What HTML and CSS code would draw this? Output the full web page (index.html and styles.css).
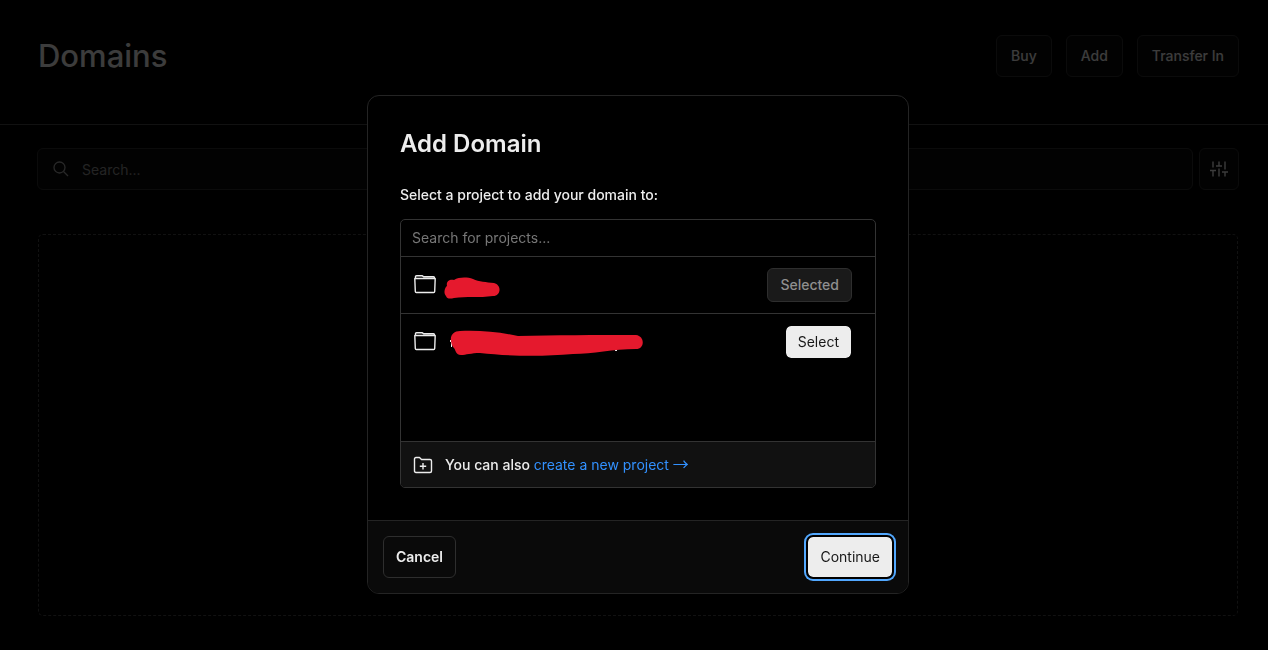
FILE: index.html
```
<!DOCTYPE html>
<html lang="en">
<head>
    <meta charset="utf-8">
    <meta name="viewport" content="width=device-width, initial-scale=1">
    <title>Domains</title>
    <link rel="stylesheet" href="styles.css">
</head>
<body>
    <header class="page-header">
        <h1>Domains</h1>
        <div class="header-actions">
            <button type="button" class="btn">Buy</button>
            <button type="button" class="btn">Add</button>
            <button type="button" class="btn">Transfer In</button>
        </div>
    </header>

    <main class="page-content">
        <div class="toolbar">
            <label class="search-box">
                <svg width="16" height="16" viewBox="0 0 16 16" fill="none" stroke="currentColor" stroke-width="1.3">
                    <circle cx="6.5" cy="6.5" r="5.5"/>
                    <path d="M10.5 10.5 L15 15"/>
                </svg>
                <input type="text" placeholder="Search..." aria-label="Search domains">
            </label>
            <button type="button" class="btn btn-icon" aria-label="Filter">
                <svg width="18" height="16" viewBox="0 0 18 16" fill="none" stroke="currentColor" stroke-width="1.4">
                    <path d="M3 .5V6.500M3 9.500V15.500M0 9.500H6M9 .5V5M9 7.500V15.500M6 5H12M15 .5V8.500M15 11V15.500M12 11H18"/>
                </svg>
            </button>
        </div>
        <div class="empty-state"></div>
    </main>

    <div class="overlay">
        <div class="modal" role="dialog" aria-modal="true" aria-labelledby="modal-title">
            <div class="modal-body">
                <h2 id="modal-title">Add Domain</h2>
                <label class="modal-label" for="project-search">Select a project to add your domain to:</label>
                <div class="picker">
                    <input type="text" id="project-search" class="picker-search" placeholder="Search for projects...">
                    <ul class="project-list">
                        <li class="project">
                            <svg class="folder" width="22" height="20" viewBox="0 1 22 20" fill="none" stroke="currentColor" stroke-width="1.4" stroke-linejoin="round">
                                <path d="M1.500 4.500V2.700Q1.500 1.700 2.500 1.700H8L9.500 2.700H19.500Q20.500 2.700 20.500 3.700V4.500M.8 4.500H21.200L20.700 17.500Q20.600 18.500 19.700 18.500H2.300Q1.400 18.500 1.300 17.500Z"/>
                            </svg>
                            <svg class="scribble" width="200" height="28" viewBox="0 0 200 28">
                                <path d="M2 25C-1 22 1 16 3 15C2 11 5 8 10 9C15 6 23 6 29 8C35 11 42 11 50 12C58 14 57 25 49 25C35 27 22 25 10 27C6 28 3 28 2 25Z"/>
                            </svg>
                            <button type="button" class="btn btn-small" disabled>Selected</button>
                        </li>
                        <li class="project">
                            <svg class="folder" width="22" height="20" viewBox="0 1 22 20" fill="none" stroke="currentColor" stroke-width="1.4" stroke-linejoin="round">
                                <path d="M1.500 4.500V2.700Q1.500 1.700 2.500 1.700H8L9.500 2.700H19.500Q20.500 2.700 20.500 3.700V4.500M.8 4.500H21.200L20.700 17.500Q20.600 18.500 19.700 18.500H2.300Q1.400 18.500 1.300 17.500Z"/>
                            </svg>
                            <svg class="scribble" width="200" height="28" viewBox="0 0 200 28">
                                <path class="rest" d="M6 12H7V14H6ZM7 14H8V19H7ZM171 21H173V23H171Z"/>
                                <path d="M7 13C6 7 10 3 16 3C35 2 56 4 74 8C111 7 151 7 192 7C201 8 201 21 192 21C169 21 149 26 129 26C96 29 63 28 36 25C27 25 22 27 17 27C11 27 12 21 9 19Q7 16 7 13Z"/>
                            </svg>
                            <button type="button" class="btn btn-small btn-light">Select</button>
                        </li>
                    </ul>
                    <div class="picker-footer">
                        <svg width="20" height="18" viewBox="0 0 20 18" fill="none" stroke="currentColor" stroke-width="1.4" stroke-linejoin="round">
                            <path d="M1.500 3Q1.500 1.500 3 1.500H6.500L8.500 3.500H17Q18.500 3.500 18.500 5V15Q18.500 16.500 17 16.500H3Q1.500 16.500 1.500 15ZM10 7V13.500M6.800 10.200H13.200"/>
                        </svg>
                        <p>You can also <a href="#">create a new project <span class="arrow">→</span></a></p>
                    </div>
                </div>
            </div>
            <div class="modal-footer">
                <button type="button" class="btn btn-cancel">Cancel</button>
                <button type="button" class="btn btn-light btn-focus">Continue</button>
            </div>
        </div>
    </div>
</body>
</html>
```
FILE: styles.css
```
* {
    box-sizing: border-box;
}
body {
    font-family: Inter, sans-serif;
    font-size: 14px;
    line-height: 20px;
    margin: 0;
    min-height: 100vh;
    background: #000;
    color: #ededed;
}
h1, h2, p, ul {
    margin: 0;
    padding: 0;
}
input {
    font: inherit;
    color: inherit;
    background: none;
    border: none;
    outline: none;
    padding: 0;
}
input::placeholder {
    color: #777;
    opacity: 1;
}
svg {
    display: block;
    flex: none;
}
.page-header {
    display: flex;
    justify-content: space-between;
    align-items: flex-start;
    padding: 35px 29px 47px 38px;
    border-bottom: 1px solid #444;
}
h1 {
    font-size: 31px;
    font-weight: 500;
    line-height: 42px;
}
.header-actions {
    display: flex;
    gap: 14px;
}
.btn {
    height: 42px;
    padding: 0 14px;
    font: inherit;
    font-weight: 500;
    color: #ededed;
    background: #0a0a0a;
    border: 1px solid #2e2e2e;
    border-radius: 6px;
    cursor: pointer;
}
.page-content {
    padding: 23px 29px 34px 37px;
}
.toolbar {
    display: flex;
    gap: 6px;
}
.search-box {
    flex: 1;
    display: flex;
    align-items: center;
    gap: 13px;
    height: 42px;
    padding: 0 15px;
    color: #a0a0a0;
    background: #0a0a0a;
    border: 1px solid #2e2e2e;
    border-radius: 6px;
}
.search-box input {
    flex: 1;
    padding-top: 2px;
}
.search-box input::placeholder {
    color: #8f8f8f;
}
.btn-icon {
    display: flex;
    justify-content: center;
    align-items: center;
    width: 40px;
    padding: 0;
}
.empty-state {
    height: 382px;
    margin: 44px 1px 0;
    border: 1px dashed #444;
    border-radius: 5px;
}
.overlay {
    position: fixed;
    inset: 0;
    display: flex;
    justify-content: center;
    align-items: flex-start;
    padding: 95px 0 0 8px;
    background: rgba(0, 0, 0, 0.75);
}
.modal {
    width: 542px;
    max-width: 100%;
    background: #000;
    border: 1px solid #242424;
    border-radius: 12px;
    overflow: hidden;
}
.modal-body {
    padding: 32px;
}
h2 {
    font-size: 24px;
    font-weight: 600;
    line-height: 32px;
    margin-bottom: 24px;
}
.modal-label {
    display: block;
    font-weight: 500;
    line-height: 22px;
    margin-bottom: 13px;
}
.picker {
    border: 1px solid #333;
    border-radius: 5px;
    overflow: hidden;
}
.picker-search {
    display: block;
    width: 100%;
    height: 37px;
    padding: 0 11px 2px;
    border-bottom: 1px solid #333;
}
.project-list {
    list-style: none;
    height: 184px;
}
.project {
    display: flex;
    align-items: center;
    height: 57px;
    padding: 0 23px 0 13px;
}
.project:first-child {
    height: 56px;
}
.project + .project {
    border-top: 1px solid #333;
}
.scribble {
    margin-left: 8px;
    fill: #e5192d;
}
.scribble .rest {
    fill: #ededed;
}
.btn-small {
    height: 34px;
    padding: 0 12px;
    margin-left: auto;
}
.btn:disabled {
    color: #8f8f8f;
    background: #1a1a1a;
    cursor: default;
}
.btn-light {
    color: #171717;
    font-weight: 400;
    background: #ededed padding-box;
    border-color: #000;
}
.btn-focus {
    box-shadow: 0 0 0 1px #000, 0 0 0 3px #52a8ff;
}
.picker-footer {
    display: flex;
    align-items: center;
    gap: 12px;
    height: 46px;
    padding: 0 12px;
    font-weight: 500;
    background: #111;
    border-top: 1px solid #333;
}
.picker-footer a {
    color: #3291ff;
    font-weight: 400;
    text-decoration: none;
}
.arrow {
    font-family: "Noto Sans CJK SC", sans-serif;
    font-size: 16px;
    line-height: 1;
}
.modal-footer {
    display: flex;
    justify-content: space-between;
    padding: 15px;
    background: #0a0a0a;
    border-top: 1px solid #242424;
}
.btn-cancel {
    padding: 0 12px;
    font-weight: 600;
}
.modal-footer .btn-light {
    padding: 0 12px;
}
```
